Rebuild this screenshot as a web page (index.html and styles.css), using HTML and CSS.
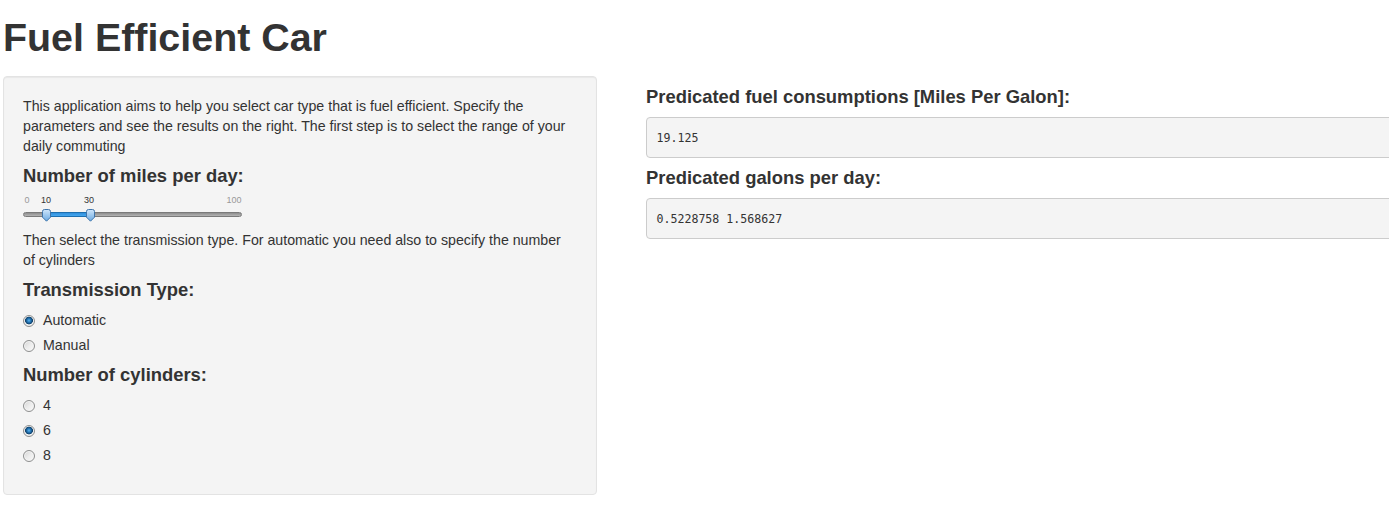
FILE: index.html
```html
<!DOCTYPE html>
<html>
<head>
<meta charset="utf-8">
<title>Fuel Efficient Car</title>
<link rel="stylesheet" href="styles.css">
</head>
<body>
<div class="page">
  <h1 class="title">Fuel Efficient Car</h1>
  <div class="row">
    <div class="well">
      <p class="text">This application aims to help you select car type that is fuel efficient. Specify the parameters and see the results on the right. The first step is to select the range of your daily commuting</p>
      <h4 class="label">Number of miles per day:</h4>
      <div class="slider">
        <span class="s-lab s-min">0</span>
        <span class="s-lab s-from">10</span>
        <span class="s-lab s-to">30</span>
        <span class="s-lab s-max">100</span>
        <div class="s-track"></div>
        <div class="s-range"></div>
        <svg class="s-handle s-h1" width="11" height="13" viewBox="0 0 11 13"><defs><linearGradient id="hg" x1="0" y1="0" x2="0" y2="1"><stop offset="0" stop-color="#cfe6fb"/><stop offset="1" stop-color="#6aa9e2"/></linearGradient></defs><path d="M1.5 2.5 Q1.5 0.5 3.5 0.5 H7.5 Q9.5 0.5 9.5 2.5 V8.2 L5.5 12.2 L1.5 8.2 Z" fill="url(#hg)" stroke="#3f74aa" stroke-width="1"/></svg>
        <svg class="s-handle s-h2" width="11" height="13" viewBox="0 0 11 13"><path d="M1.5 2.5 Q1.5 0.5 3.5 0.5 H7.5 Q9.5 0.5 9.5 2.5 V8.2 L5.5 12.2 L1.5 8.2 Z" fill="url(#hg)" stroke="#3f74aa" stroke-width="1"/></svg>
      </div>
      <p class="text">Then select the transmission type. For automatic you need also to specify the number of cylinders</p>
      <h4 class="label">Transmission Type:</h4>
      <div class="radio"><span class="ricon checked"></span>Automatic</div>
      <div class="radio"><span class="ricon"></span>Manual</div>
      <h4 class="label">Number of cylinders:</h4>
      <div class="radio"><span class="ricon"></span>4</div>
      <div class="radio"><span class="ricon checked"></span>6</div>
      <div class="radio"><span class="ricon"></span>8</div>
    </div>
    <div class="main">
      <h4 class="label">Predicated fuel consumptions [Miles Per Galon]:</h4>
      <pre class="out">19.125</pre>
      <h4 class="label">Predicated galons per day:</h4>
      <pre class="out">0.5228758 1.568627</pre>
    </div>
  </div>
</div>
</body>
</html>
```

FILE: styles.css
```css
html, body {
  margin: 0;
  padding: 0;
  overflow: hidden;
  background: #fff;
}
body {
  font-family: "Liberation Sans", Arial, sans-serif;
  font-size: 14.2px;
  line-height: 20px;
  color: #333;
}
.page {
  padding-left: 3px;
}
.title {
  font-size: 39.4px;
  font-weight: bold;
  line-height: 1.1;
  margin: 16px 0 17px 0;
  color: #333;
}
.row {
  display: flex;
  align-items: flex-start;
  gap: 49px;
}
.well {
  box-sizing: border-box;
  width: 594px;
  flex: none;
  background: #f4f4f4;
  border: 1px solid #e3e3e3;
  border-radius: 4px;
  padding: 19px;
  box-shadow: inset 0 1px 1px rgba(0,0,0,0.05);
}
.text {
  margin: 0 3px 10px 0;
}
.label {
  font-size: 18.4px;
  font-weight: bold;
  line-height: 20px;
  margin: 10px 0;
  color: #333;
}
.slider {
  position: relative;
  height: 34px;
  width: 220px;
  margin: 0;
}
.slider + .text {
  margin-top: 0;
}
.s-lab {
  position: absolute;
  top: 0;
  font-size: 9px;
  line-height: 9px;
  transform: translateX(-50%);
  color: #333;
}
.s-min { left: 4px; color: #999; }
.s-max { left: 211px; color: #999; }
.s-from { left: 23px; }
.s-to { left: 66px; }
.s-track {
  position: absolute;
  left: 0;
  top: 16px;
  width: 219px;
  height: 5px;
  box-sizing: border-box;
  border-radius: 3px;
  border: 1px solid #7a7a7a;
  background: linear-gradient(#8d8d8d, #b4b4b4);
}
.s-range {
  position: absolute;
  left: 23px;
  width: 44px;
  top: 16px;
  height: 5px;
  box-sizing: border-box;
  border-top: 1px solid #1c6fb0;
  border-bottom: 1px solid #1c6fb0;
  background: linear-gradient(#2f8fdc, #45a7ef);
}
.s-handle {
  position: absolute;
  top: 13px;
  display: block;
}
.s-h1 { left: 18px; }
.s-h2 { left: 62px; }
.radio {
  display: flex;
  align-items: center;
  height: 20px;
  margin: 10px 0;
  line-height: 20px;
}
.radio + .radio {
  margin-top: -5px;
}
.ricon {
  box-sizing: border-box;
  width: 12px;
  height: 12px;
  border-radius: 50%;
  border: 1px solid #8e8f8f;
  background: linear-gradient(135deg, #d4d4d4 0%, #ececec 50%, #fafafa 100%);
  margin: 1px 8px 0 0;
  box-shadow: inset 0 0 0 1px #f4f4f4;
}
.ricon.checked {
  background: radial-gradient(circle at 50% 45%, #5fb6ef 0, #2a7fc0 1.6px, #124c7c 3.2px, #0e3f68 3.6px, #f6f6f6 4.2px, #e2e2e2 6px);
  box-shadow: none;
}
.main {
  width: 760px;
  flex: none;
  padding-top: 1px;
}
.out {
  margin: 0 0 10px 0;
  padding: 9.5px;
  font-family: "DejaVu Sans Mono", "Liberation Mono", monospace;
  font-size: 11.6px;
  line-height: 20px;
  color: #333;
  background: #f4f4f4;
  border: 1px solid #ccc;
  border-radius: 4px;
  white-space: pre;
}
```
